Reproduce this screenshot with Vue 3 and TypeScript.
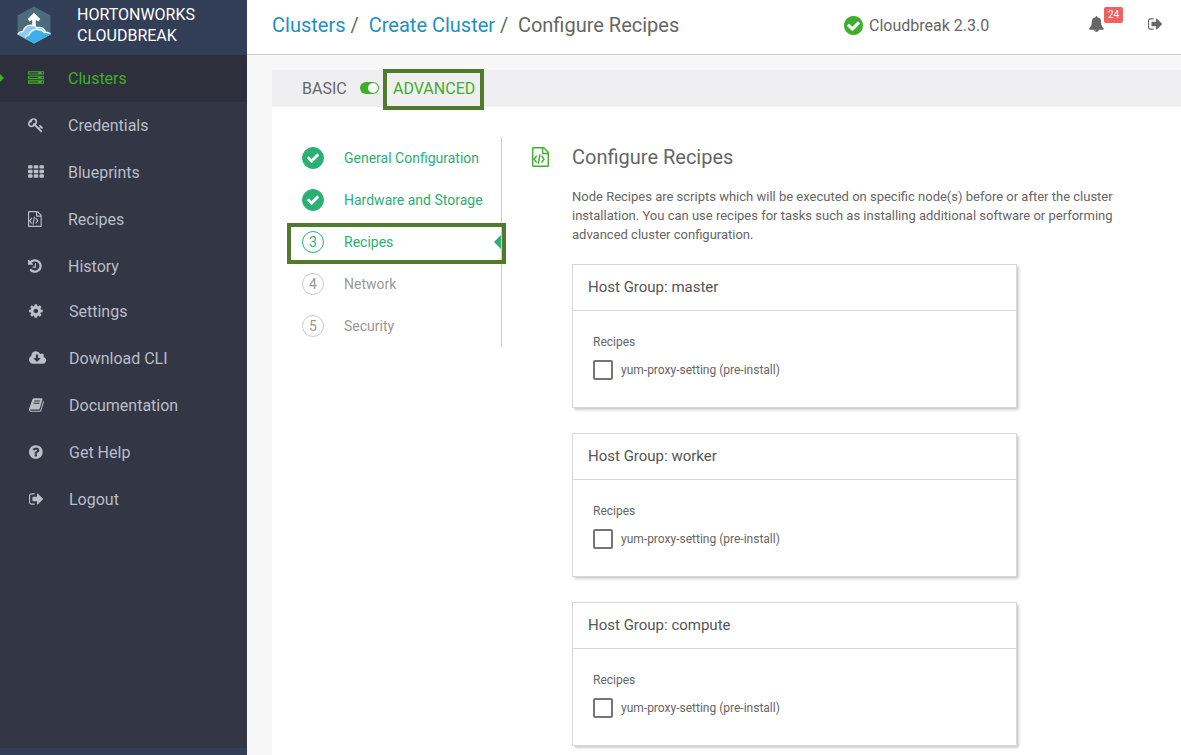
<script setup lang="ts">
interface Glyph {
  box: string
  d: string
}
interface NavItem {
  label: string
  icon: string
  active?: boolean
}
interface Step {
  label: string
  state: 'done' | 'current' | 'todo'
}

const circle = 'm252 162q0 209-103 385.5t-279.5 279.5-385.5 103-385.5-103-279.5-279.5-103-385.5 103-385.5 279.5-279.5 385.5-103 385.5 103 279.5 279.5 103 385.5z'

const icons: Record<string, Glyph> = {
  server: {
    box: '0 0 2016 1792',
    d: 'M128 1408h1024v-128h-1024v128zm0-512h1024v-128h-1024v128zm1568 448q0-40-28-68t-68-28-68 28-28 68 28 68 68 28 68-28 28-68zm-1568-960h1024v-128h-1024v128zm1568 448q0-40-28-68t-68-28-68 28-28 68 28 68 68 28 68-28 28-68zm0-512q0-40-28-68t-68-28-68 28-28 68 28 68 68 28 68-28 28-68zm96 832v384h-1792v-384h1792zm0-512v384h-1792v-384h1792zm0-512v384h-1792v-384h1792z',
  },
  key: {
    box: '0 0 2016 1792',
    d: 'M832 512q0-80-56-136t-136-56-136 56-56 136q0 42 19 83-41-19-83-19-80 0-136 56t-56 136 56 136 136 56 136-56 56-136q0-42-19-83 41 19 83 19 80 0 136-56t56-136zm851 704q0 17-49 66t-66 49q-9 0-28.5-16t-36.5-33-38.5-40-24.5-26l-96 96 220 220q28 28 28 68 0 42-39 81t-81 39q-40 0-68-28l-671-671q-176 131-365 131-163 0-265.5-102.5t-102.5-265.5q0-160 95-313t248-248 313-95q163 0 265.5 102.5t102.5 265.5q0 189-131 365l355 355 96-96q-3-3-26-24.5t-40-38.5-33-36.5-16-28.5q0-17 49-66t66-49q13 0 23 10 6 6 46 44.5t82 79.5 86.5 86 73 78 28.5 41z',
  },
  grid: {
    box: '0 0 2016 1792',
    d: 'M96 128h320q96 0 96 96v192q0 96-96 96h-320q-96 0-96-96v-192q0-96 96-96zm640 0h320q96 0 96 96v192q0 96-96 96h-320q-96 0-96-96v-192q0-96 96-96zm640 0h320q96 0 96 96v192q0 96-96 96h-320q-96 0-96-96v-192q0-96 96-96zM96 640h320q96 0 96 96v192q0 96-96 96h-320q-96 0-96-96v-192q0-96 96-96zm640 0h320q96 0 96 96v192q0 96-96 96h-320q-96 0-96-96v-192q0-96 96-96zm640 0h320q96 0 96 96v192q0 96-96 96h-320q-96 0-96-96v-192q0-96 96-96zM96 1152h320q96 0 96 96v192q0 96-96 96h-320q-96 0-96-96v-192q0-96 96-96zm640 0h320q96 0 96 96v192q0 96-96 96h-320q-96 0-96-96v-192q0-96 96-96zm640 0h320q96 0 96 96v192q0 96-96 96h-320q-96 0-96-96v-192q0-96 96-96z',
  },
  code: {
    box: '128 0 2016 1792',
    d: 'M1596 380q28 28 48 76t20 88v1152q0 40-28 68t-68 28h-1344q-40 0-68-28t-28-68v-1600q0-40 28-68t68-28h896q40 0 88 20t76 48zm-444-244v376h376q-10-29-22-41l-313-313q-12-12-41-22zm384 1528v-1024h-416q-40 0-68-28t-28-68v-416h-768v1536h1280zm-1056-896q8-11 21-12.5t24 6.5l51 38q11 8 12.5 21t-6.5 24l-182 243 182 243q8 11 6.5 24t-12.5 21l-51 38q-11 8-24 6.5t-21-12.5l-226-301q-14-19 0-38zm802 301q14 19 0 38l-226 301q-8 11-21 12.5t-24-6.5l-51-38q-11-8-12.5-21t6.5-24l182-243-182-243q-8-11-6.5-24t12.5-21l51-38q11-8 24-6.5t21 12.5zm-620 461q-13-2-20.5-13t-5.5-24l138-831q2-13 13-20.5t24-5.5l63 10q13 2 20.5 13t5.5 24l-138 831q-2 13-13 20.5t-24 5.5z',
  },
  history: {
    box: '128 0 2016 1792',
    d: 'M1664 896q0 156-61 298t-164 245-245 164-298 61q-172 0-327-72.5t-264-204.5q-7-10-6.5-22.5t8.5-20.5l137-138q10-9 25-9 16 2 23 12 73 95 179 147t225 52q104 0 198.5-40.5t163.5-109.5 109.5-163.5 40.5-198.5-40.5-198.5-109.5-163.5-163.5-109.5-198.5-40.5q-98 0-188 35.5t-160 101.5l137 138q31 30 14 69-17 40-59 40h-448q-26 0-45-19t-19-45v-448q0-42 40-59 39-17 69 14l130 129q107-101 244.5-156.5t284.5-55.5q156 0 298 61t245 164 164 245 61 298zm-640-288v448q0 14-9 23t-23 9h-320q-14 0-23-9t-9-23v-64q0-14 9-23t23-9h224v-352q0-14 9-23t23-9h64q14 0 23 9t9 23z',
  },
  cog: {
    box: '128 0 2016 1792',
    d: 'M1152 896q0-106-75-181t-181-75-181 75-75 181 75 181 181 75 181-75 75-181zm512-109v222q0 12-8 23t-20 13l-185 28q-19 54-39 91 35 50 107 138 10 12 10 25t-9 23q-27 37-99 108t-94 71q-12 0-26-9l-138-108q-44 23-91 38-16 136-29 186-7 28-36 28h-222q-14 0-24.5-8.5t-11.5-21.5l-28-184q-49-16-90-37l-141 107q-10 9-25 9-14 0-25-11-126-114-165-168-7-10-7-23 0-12 8-23 15-21 51-66.5t54-70.5q-27-50-41-99l-183-27q-13-2-21-12.5t-8-23.5v-222q0-12 8-23t19-13l186-28q14-46 39-92-40-57-107-138-10-12-10-24 0-10 9-23 26-36 98.5-107.5t94.5-71.5q13 0 26 10l138 107q44-23 91-38 16-136 29-186 7-28 36-28h222q14 0 24.5 8.5t11.5 21.5l28 184q49 16 90 37l142-107q9-9 24-9 13 0 25 10 129 119 165 170 7 8 7 22 0 12-8 23-15 21-51 66.5t-54 70.5q26 50 41 98l183 28q13 2 21 12.5t8 23.5z',
  },
  cloud: {
    box: '-64 0 2016 1792',
    d: 'M1216 928q0-14-9-23t-23-9h-224v-352q0-13-9.5-22.5t-22.5-9.5h-192q-13 0-22.5 9.5t-9.5 22.5v352h-224q-13 0-22.5 9.5t-9.5 22.5q0 14 9 23l352 352q9 9 23 9t23-9l351-351q10-12 10-24zm640 224q0 159-112.5 271.5t-271.5 112.5h-1088q-185 0-316.5-131.5t-131.5-316.5q0-130 70-240t188-165q-2-30-2-43 0-212 150-362t362-150q156 0 285.5 87t188.5 231q71-62 166-62 106 0 181 75t75 181q0 76-41 138 130 31 213.5 135.5t83.5 238.5z',
  },
  book: {
    box: '64 0 2016 1792',
    d: 'M1703 478q40 57 18 129l-275 906q-19 64-76.5 107.5t-122.5 43.5h-923q-77 0-148.5-53.5t-99.5-131.5q-24-67-2-127 0-4 3-27t4-37q1-8-3-21.5t-3-19.5q2-11 8-21t16.5-23.5 16.5-23.5q23-38 45-91.5t30-91.5q3-10 .5-30t-.5-28q3-11 17-28t17-23q21-36 42-92t25-90q1-9-2.5-32t.5-28q4-13 22-30.5t22-22.5q19-26 42.5-84.5t27.5-96.5q1-8-3-25.5t-2-26.5q2-8 9-18t18-23 17-21q8-12 16.5-30.5t15-35 16-36 19.5-32 26.5-23.5 36-11.5 47.5 5.5l-1 3q38-9 51-9h761q74 0 114 56t18 130l-274 906q-36 119-71.5 153.5t-128.5 34.5h-869q-27 0-38 15-11 16-1 43 24 70 144 70h923q29 0 56-15.5t35-41.5l300-987q7-22 5-57 38 15 59 43zm-1064 2q-4 13 2 22.5t20 9.5h608q13 0 25.5-9.5t16.5-22.5l21-64q4-13-2-22.5t-20-9.5h-608q-13 0-25.5 9.5t-16.5 22.5zm-83 256q-4 13 2 22.5t20 9.5h608q13 0 25.5-9.5t16.5-22.5l21-64q4-13-2-22.5t-20-9.5h-608q-13 0-25.5 9.5t-16.5 22.5z',
  },
  help: {
    box: '128 0 2016 1792',
    d: 'M1024 1376v-192q0-14-9-23t-23-9h-192q-14 0-23 9t-9 23v192q0 14 9 23t23 9h192q14 0 23-9t9-23zm256-672q0-88-55.5-163t-138.5-116-170-41q-243 0-371 213-15 24 8 42l132 100q7 6 19 6 16 0 25-12 53-68 86-92 34-24 86-24 48 0 85.5 26t37.5 59q0 38-20 61t-68 45q-63 28-115.5 86.5t-52.5 125.5v36q0 14 9 23t23 9h192q14 0 23-9t9-23q0-19 21.5-49.5t54.5-49.5q32-18 49-28.5t46-35 44.5-48 28-60.5 12.5-81zm384 192q0 209-103 385.5t-279.5 279.5-385.5 103-385.5-103-279.5-279.5-103-385.5 103-385.5 279.5-279.5 385.5-103 385.5 103 279.5 279.5 103 385.5z',
  },
  exit: {
    box: '64 0 2016 1792',
    d: 'M704 1440q0 4 1 20t.5 26.5-3 23.5-10 19.5-20.5 6.5h-320q-119 0-203.5-84.5t-84.5-203.5v-704q0-119 84.5-203.5t203.5-84.5h320q13 0 22.5 9.5t9.5 22.5q0 4 1 20t.5 26.5-3 23.5-10 19.5-20.5 6.5h-320q-66 0-113 47t-47 113v704q0 66 47 113t113 47h312l11.5 1 11.5 3 8 5.5 7 9 2 13.5zm928-544q0 26-19 45l-544 544q-19 19-45 19t-45-19-19-45v-288h-448q-26 0-45-19t-19-45v-384q0-26 19-45t45-19h448v-288q0-26 19-45t45-19 45 19l544 544q19 19 19 45z',
  },
  bell: {
    box: '64 0 2016 1792',
    d: 'M912 1696q0-16-16-16-59 0-101.5-42.5t-42.5-101.5q0-16-16-16t-16 16q0 73 51.5 124.5t124.5 51.5q16 0 16-16zm816-288q0 52-38 90t-90 38h-448q0 106-75 181t-181 75-181-75-75-181h-448q-52 0-90-38t-38-90q50-42 91-88t85-119.5 74.5-158.5 50-206 19.5-260q0-152 117-282.5t307-158.5q-8-19-8-39 0-40 28-68t68-28 68 28 28 68q0 20-8 39 190 28 307 158.5t117 282.5q0 139 19.5 260t50 206 74.5 158.5 85 119.5 91 88z',
  },
  okCircle: {
    box: '128 128 1536 1536',
    d: 'M1412 734q0-28-18-46l-91-90q-19-19-45-19t-45 19l-408 407-226-226q-19-19-45-19t-45 19l-91 90q-18 18-18 46 0 27 18 45l362 362q19 19 45 19 27 0 46-19l543-543q18-18 18-45z' + circle,
  },
  check: {
    box: '0 0 1792 1792',
    d: 'M1671 566q0 40-28 68l-724 724-136 136q-28 28-68 28t-68-28l-136-136-362-362q-28-28-28-68t28-68l136-136q28-28 68-28t68 28l294 295 656-657q28-28 68-28t68 28l136 136q28 28 28 68z',
  },
}

const primaryNav: NavItem[] = [
  { label: 'Clusters', icon: 'server', active: true },
  { label: 'Credentials', icon: 'key' },
  { label: 'Blueprints', icon: 'grid' },
  { label: 'Recipes', icon: 'code' },
  { label: 'History', icon: 'history' },
]
const secondaryNav: NavItem[] = [
  { label: 'Settings', icon: 'cog' },
  { label: 'Download CLI', icon: 'cloud' },
  { label: 'Documentation', icon: 'book' },
  { label: 'Get Help', icon: 'help' },
  { label: 'Logout', icon: 'exit' },
]
const steps: Step[] = [
  { label: 'General Configuration', state: 'done' },
  { label: 'Hardware and Storage', state: 'done' },
  { label: 'Recipes', state: 'current' },
  { label: 'Network', state: 'todo' },
  { label: 'Security', state: 'todo' },
]
const hostGroups: string[] = ['master', 'worker', 'compute']
</script>

<template>
  <div class="app">
    <aside class="sidebar">
      <div class="brand">
        <svg class="logo" viewBox="0 0 34 38">
          <defs>
            <clipPath id="hex"><path d="M17 .5 33.5 9.5V28.5L17 37.500.5 28.500V9.500z" /></clipPath>
          </defs>
          <g clip-path="url(#hex)">
            <rect width="34" height="38" fill="#4c6b7d" />
            <path d="M0 29C2 26 4 25.500 6 25.500 7 21 10 19 14 19c3 0 4.500 1 6 2.500C24 20.500 27 22 28.500 25L34 27v11H0z" fill="#8ccbf0" />
            <path d="M6 31.500C9 30 10.500 30.500 12 29.500 13 25 17 23 21 23.500c3 0 5 1 6.500 2.500 2 0 4 0 6.500 2v10H6z" fill="#3cb0e5" />
            <path d="M0 28.500C2 26 4 25.300 6 25.300 7.500 21 10 19.200 14 19.200c3 0 4.500 1 6 2.500 4-1 7 .500 8.500 4M8 32c1-2 2.500-2.600 4-2.800C13 25 17 23 21 23.500c3 .2 5 1.200 6.500 3 2-.5 4 0 6.500 1.500" fill="none" stroke="#fff" stroke-width="1.300" />
            <path d="M17 6.800 23.300 13 21.300 15.400 18.800 13.800V20H15.200V13.800L12.700 15.400 10.700 13z" fill="#fff" />
          </g>
        </svg>
        <div class="brand-name">HORTONWORKS<br />CLOUDBREAK</div>
      </div>
      <nav class="nav">
        <a v-for="n in primaryNav" :key="n.label" class="nav-item" :class="{ active: n.active }">
          <svg class="icon" :viewBox="icons[n.icon].box"><path :d="icons[n.icon].d" /></svg>
          <span>{{ n.label }}</span>
        </a>
      </nav>
      <nav class="nav nav-second">
        <a v-for="n in secondaryNav" :key="n.label" class="nav-item">
          <svg class="icon" :viewBox="icons[n.icon].box"><path :d="icons[n.icon].d" /></svg>
          <span>{{ n.label }}</span>
        </a>
      </nav>
      <div class="sidebar-foot"></div>
    </aside>

    <div class="main">
      <header class="topbar">
        <div class="crumbs">
          <a>Clusters</a><span class="s1">/</span>
          <a>Create Cluster</a><span class="s2">/</span>
          <span>Configure Recipes</span>
        </div>
        <div class="version">
          <svg class="ok" :viewBox="icons.okCircle.box"><path :d="icons.okCircle.d" /></svg>
          <span>Cloudbreak 2.3.0</span>
        </div>
        <div class="alerts">
          <svg class="icon" :viewBox="icons.bell.box"><path :d="icons.bell.d" /></svg>
          <span class="badge">24</span>
        </div>
        <svg class="icon exit" :viewBox="icons.exit.box"><path :d="icons.exit.d" /></svg>
      </header>

      <section class="panel">
        <div class="modebar">
          <span class="basic">BASIC</span>
          <svg class="toggle" viewBox="0 0 19 12">
            <rect width="19" height="12" rx="6" fill="#3fae2a" />
            <circle cx="13" cy="6" r="5" fill="#fff" />
          </svg>
          <span class="advanced">ADVANCED</span>
        </div>

        <div class="content">
          <ol class="steps">
            <li v-for="(s, i) in steps" :key="s.label" class="step" :class="s.state">
              <span class="dot">
                <svg v-if="s.state === 'done'" class="tick" :viewBox="icons.check.box"><path :d="icons.check.d" /></svg>
                <template v-else>{{ i + 1 }}</template>
              </span>
              <span class="step-label">{{ s.label }}</span>
            </li>
          </ol>

          <div class="body">
            <div class="title">
              <svg class="title-icon" viewBox="128 0 1536 1792"><path :d="icons.code.d" /></svg>
              <h1>Configure Recipes</h1>
            </div>
            <p class="intro">
              Node Recipes are scripts which will be executed on specific node(s) before or after the cluster<br />
              installation. You can use recipes for tasks such as installing additional software or performing<br />
              advanced cluster configuration.
            </p>
            <div v-for="g in hostGroups" :key="g" class="card">
              <div class="card-head">Host Group: {{ g }}</div>
              <div class="card-body">
                <div class="card-label">Recipes</div>
                <label class="check"><span class="box"></span><span>yum-proxy-setting (pre-install)</span></label>
              </div>
            </div>
          </div>
        </div>
      </section>
    </div>
  </div>
</template>

<style>
body {
  margin: 0;
  overflow: hidden;
}
</style>

<style scoped>
.app {
  display: flex;
  width: 1181px;
  height: 755px;
  overflow: hidden;
  font-family: Roboto, "Liberation Sans", sans-serif;
  color: #666;
  background: #f7f7f7;
}
.app *,
.app *::before,
.app *::after {
  box-sizing: border-box;
}
svg {
  display: block;
  flex: none;
  fill: currentColor;
}
.icon {
  width: 18px;
  height: 16px;
}
.sidebar {
  display: flex;
  flex-direction: column;
  flex: none;
  width: 247px;
  background: #333645;
}
.brand {
  display: flex;
  flex: none;
  height: 55px;
  padding: 6px 0 0 17px;
  background: #323e56;
}
.logo {
  width: 34px;
  height: 38px;
}
.brand-name {
  margin: -2px 0 0 26px;
  font-size: 16px;
  line-height: 21px;
  color: #fff;
}
.nav-item {
  position: relative;
  display: flex;
  align-items: center;
  height: 47px;
  padding-left: 28px;
  gap: 22px;
  font-size: 16px;
  color: #b9bec7;
}
.nav-item .icon {
  margin-bottom: 1px;
}
.nav-item.active {
  color: #3fae2a;
  background: #2e2f3c;
}
.nav-item.active::before {
  content: "";
  position: absolute;
  left: 0;
  top: 19px;
  border: 4px solid transparent;
  border-left-color: #3fae2a;
}
.nav-second {
  margin-top: -2px;
}
.nav-second .nav-item {
  padding-left: 29px;
}
.sidebar-foot {
  height: 7px;
  margin-top: auto;
  background: #323e56;
}
.main {
  display: flex;
  flex-direction: column;
  flex: 1;
  min-width: 0;
}
.topbar {
  display: flex;
  align-items: center;
  flex: none;
  height: 55px;
  padding: 0 14px 3px 25px;
  background: #fff;
  border-bottom: 1px solid #cfcfcf;
}
.crumbs {
  display: flex;
  flex: none;
  width: 572px;
  margin-bottom: 1px;
  font-size: 20px;
  line-height: 24px;
  white-space: nowrap;
}
.crumbs a {
  color: #2191c0;
}
.s1 {
  margin: 0 10px 0 5px;
}
.s2 {
  margin: 0 9.5px 0 5px;
}
.version {
  display: flex;
  align-items: center;
  flex: none;
  gap: 6px;
  width: 245px;
  font-size: 16px;
}
.ok {
  width: 19px;
  height: 19px;
  color: #3fae2a;
}
.alerts {
  position: relative;
  flex: none;
  width: 59px;
}
.topbar .icon {
  margin-bottom: 3px;
}
.badge {
  position: absolute;
  left: 15px;
  top: -9px;
  width: 19px;
  height: 16px;
  border-radius: 2px;
  font-size: 10px;
  line-height: 16px;
  text-align: center;
  color: #fff;
  background: #ef6162;
}
.panel {
  flex: 1;
  margin: 15px 0 0 25px;
  background: #fff;
}
.modebar {
  display: flex;
  align-items: center;
  height: 37px;
  padding-left: 30px;
  font-size: 16px;
  background: #efeff2;
}
.basic {
  width: 58px;
}
.toggle {
  width: 19px;
  height: 12px;
  margin-bottom: 1px;
}
.advanced {
  position: relative;
  margin-left: 14px;
  color: #3fae2a;
}
.advanced::after {
  content: "";
  position: absolute;
  left: -10px;
  top: -10px;
  width: 101px;
  height: 41px;
  border: 4px solid #507a2c;
}
.content {
  display: flex;
  padding: 30px 0 0 30px;
}
.steps {
  width: 200px;
  height: 210px;
  margin: 0;
  padding: 0;
  list-style: none;
  border-right: 1px solid #ccc;
}
.step {
  position: relative;
  display: flex;
  align-items: center;
  height: 42px;
  gap: 20px;
  font-size: 14px;
  white-space: nowrap;
  color: #999;
}
.step.done,
.step.current {
  color: #2bb073;
}
.dot {
  display: flex;
  align-items: center;
  justify-content: center;
  flex: none;
  width: 22px;
  height: 22px;
  border: 1px solid #ccc;
  border-radius: 50%;
}
.done .dot {
  color: #fff;
  background: #2bb073;
  border-color: #2bb073;
}
.current .dot {
  border-color: #2bb073;
}
.tick {
  width: 14px;
  height: 14px;
}
.step.current::before {
  content: "";
  position: absolute;
  right: 0;
  top: 14px;
  border: 7px solid transparent;
  border-right-color: #2bb073;
  border-left: 0;
}
.step.current::after {
  content: "";
  position: absolute;
  left: -15px;
  top: 2px;
  width: 219px;
  height: 41px;
  border: 4px solid #507a2c;
}
.body {
  margin-left: 30px;
}
.title {
  display: flex;
  align-items: center;
  height: 40px;
}
.title-icon {
  width: 17px;
  height: 20px;
  color: #3fae2a;
}
h1 {
  margin: 0 0 0 23px;
  font-size: 20px;
  font-weight: 400;
}
.intro {
  margin: 10px 0 20px 40px;
  font-size: 13px;
  line-height: 19px;
  white-space: nowrap;
}
.card {
  width: 445px;
  height: 144px;
  margin: 0 0 25px 40px;
  border: 1px solid #d8d8d8;
  background: #fff;
  box-shadow: 1.5px 1.5px 3px rgba(0, 0, 0, 0.25);
}
.card-head {
  height: 46px;
  padding-left: 15px;
  border-bottom: 1px solid #d8d8d8;
  font-size: 15px;
  line-height: 44px;
  color: #555;
}
.card-body {
  padding: 24px 0 0 20px;
  font-size: 12px;
}
.card-label {
  line-height: 14px;
}
.check {
  display: flex;
  align-items: center;
  margin-top: 11px;
  gap: 8px;
}
.box {
  width: 20px;
  height: 20px;
  border: 2px solid #757575;
  border-radius: 2px;
}
</style>
